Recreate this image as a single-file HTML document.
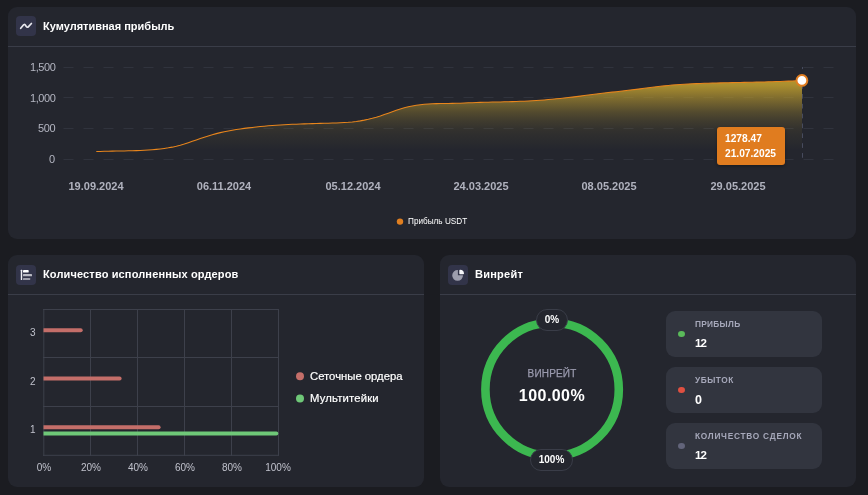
<!DOCTYPE html>
<html><head><meta charset="utf-8">
<style>
html,body{margin:0;padding:0;}
body{width:868px;height:495px;background:#1b1c21;position:relative;overflow:hidden;font-family:"Liberation Sans",sans-serif;}
.card{position:absolute;background:#24262e;border-radius:9px;}
.sep{position:absolute;left:0;right:0;top:39px;height:1px;background:#3a3d48;}
.ico{position:absolute;width:20px;height:20px;border-radius:4px;background:#323449;}
.t{position:absolute;white-space:nowrap;line-height:1;will-change:transform;}
.title{font-weight:bold;font-size:11px;color:#fff;}
.yl{font-size:11px;color:#b4b6c2;text-align:right;letter-spacing:-0.4px;}
.xl{font-size:11px;font-weight:bold;color:#b0b2be;transform:translateX(-50%);}
.bl{font-size:10px;color:#c0c2cc;}
.stat{position:absolute;left:666px;width:156px;height:46px;border-radius:9px;background:#32353f;}
.dot{position:absolute;width:6.6px;height:6px;border-radius:50%;}
.sl{font-size:8.3px;font-weight:bold;color:#a6a8ba;}
.sv{font-size:11.5px;font-weight:bold;color:#fff;letter-spacing:-1px;}
.pill{position:absolute;box-sizing:border-box;height:22px;border-radius:11px;border:1px solid #3a3d48;background:#24262e;color:#fff;font-weight:bold;font-size:10px;text-align:center;line-height:20px;will-change:transform;}
svg{position:absolute;left:0;top:0;}
</style></head><body>

<div class="card" style="left:8px;top:7px;width:848px;height:231.5px;"><div class="sep"></div></div>
<div class="card" style="left:8px;top:255px;width:416px;height:232px;"><div class="sep"></div></div>
<div class="card" style="left:440px;top:255px;width:416px;height:232px;"><div class="sep"></div></div>

<div class="ico" style="left:16px;top:16px;"></div>
<div class="ico" style="left:16px;top:265px;"></div>
<div class="ico" style="left:448px;top:265px;"></div>

<svg width="868" height="495" viewBox="0 0 868 495">
<defs>
<linearGradient id="g" gradientUnits="userSpaceOnUse" x1="0" y1="80" x2="0" y2="159.5">
<stop offset="0" stop-color="#b5962f" stop-opacity="0.98"/>
<stop offset="0.063" stop-color="#b5962f" stop-opacity="0.93"/>
<stop offset="0.25" stop-color="#b5962f" stop-opacity="0.59"/>
<stop offset="0.4" stop-color="#b5962f" stop-opacity="0.33"/>
<stop offset="0.515" stop-color="#b5962f" stop-opacity="0.19"/>
<stop offset="0.61" stop-color="#b5962f" stop-opacity="0.11"/>
<stop offset="0.69" stop-color="#b5962f" stop-opacity="0.07"/>
<stop offset="0.78" stop-color="#b5962f" stop-opacity="0.04"/>
<stop offset="0.88" stop-color="#b5962f" stop-opacity="0"/>
</linearGradient>
<filter id="bl" x="-20%" y="-20%" width="140%" height="150%"><feGaussianBlur stdDeviation="1.5"/></filter>
</defs>
<!-- icons -->
<path d="M20.7 28.3 L23.2 25.2 Q24.3 23.8 25.3 25.1 L26.3 26.5 Q27.3 27.9 28.5 26.6 L31.4 23.5" fill="none" stroke="#e8e8ee" stroke-width="1.7" stroke-linecap="round" stroke-linejoin="round"/>
<g fill="#eeeef3">
<rect x="20.8" y="269.8" width="1.4" height="10.3" rx="0.4"/>
<rect x="23" y="269.9" width="5.7" height="2.7" rx="0.9" fill="#ffffff"/>
<rect x="23" y="274" width="9" height="2.3" rx="0.6" opacity="0.72"/>
<rect x="23" y="277.9" width="7.2" height="2.2" rx="0.6" opacity="0.58"/>
</g>
<g>
<path d="M457.9 270.0 A5.4 5.4 0 1 0 463.0 275.3 L457.9 275.3 Z" fill="#9c9dad"/>
<path d="M459.3 270.5 Q459.3 269.7 460.1 269.7 A4.0 4.0 0 0 1 464.0 273.4 Q464.0 274.2 463.2 274.2 L460.1 274.2 Q459.3 274.2 459.3 273.4 Z" fill="#f6f6f9"/>
</g>
<!-- grid line chart -->
<g stroke="#30333d" stroke-width="1" stroke-dasharray="10 10">
<line x1="63.5" y1="67.5" x2="833.6" y2="67.5"/>
<line x1="63.5" y1="97.5" x2="833.6" y2="97.5"/>
<line x1="63.5" y1="128.5" x2="833.6" y2="128.5"/>
<line x1="63.5" y1="159.5" x2="833.6" y2="159.5"/>
</g>
<path d="M96.3 151.57 L100.3 151.41 L104.3 151.29 L108.3 151.19 L112.3 151.11 L116.3 151.04 L120.3 150.98 L124.3 150.91 L128.3 150.83 L132.3 150.73 L136.3 150.61 L140.3 150.46 L144.3 150.26 L148.3 150.02 L152.3 149.73 L156.3 149.37 L160.3 148.94 L164.3 148.44 L168.3 147.85 L172.3 147.14 L176.3 146.29 L180.3 145.26 L184.3 144.06 L188.3 142.74 L192.3 141.37 L196.3 139.99 L200.3 138.62 L204.3 137.27 L208.3 135.98 L212.3 134.76 L216.3 133.63 L220.3 132.62 L224.3 131.71 L228.3 130.90 L232.3 130.18 L236.3 129.52 L240.3 128.93 L244.3 128.38 L248.3 127.88 L252.3 127.41 L256.3 126.97 L260.3 126.57 L264.3 126.19 L268.3 125.85 L272.3 125.54 L276.3 125.25 L280.3 124.98 L284.3 124.75 L288.3 124.53 L292.3 124.33 L296.3 124.16 L300.3 124.00 L304.3 123.86 L308.3 123.73 L312.3 123.61 L316.3 123.50 L320.3 123.39 L324.3 123.27 L328.3 123.16 L332.3 123.04 L336.3 122.91 L340.3 122.76 L344.3 122.56 L348.3 122.30 L352.3 121.94 L356.3 121.47 L360.3 120.87 L364.3 120.13 L368.3 119.25 L372.3 118.25 L376.3 117.14 L380.3 115.93 L384.3 114.62 L388.3 113.23 L392.3 111.79 L396.3 110.36 L400.3 109.01 L404.3 107.80 L408.3 106.78 L412.3 105.93 L416.3 105.25 L420.3 104.72 L424.3 104.31 L428.3 104.00 L432.3 103.78 L436.3 103.63 L440.3 103.53 L444.3 103.47 L448.3 103.41 L452.3 103.36 L456.3 103.27 L460.3 103.15 L464.3 103.00 L468.3 102.83 L472.3 102.66 L476.3 102.50 L480.3 102.37 L484.3 102.25 L488.3 102.16 L492.3 102.07 L496.3 101.99 L500.3 101.91 L504.3 101.82 L508.3 101.73 L512.3 101.62 L516.3 101.49 L520.3 101.34 L524.3 101.16 L528.3 100.96 L532.3 100.74 L536.3 100.48 L540.3 100.21 L544.3 99.90 L548.3 99.58 L552.3 99.23 L556.3 98.85 L560.3 98.45 L564.3 98.03 L568.3 97.59 L572.3 97.12 L576.3 96.62 L580.3 96.11 L584.3 95.59 L588.3 95.07 L592.3 94.54 L596.3 94.03 L600.3 93.53 L604.3 93.05 L608.3 92.58 L612.3 92.13 L616.3 91.68 L620.3 91.23 L624.3 90.77 L628.3 90.32 L632.3 89.85 L636.3 89.36 L640.3 88.86 L644.3 88.35 L648.3 87.84 L652.3 87.33 L656.3 86.83 L660.3 86.35 L664.3 85.89 L668.3 85.47 L672.3 85.08 L676.3 84.73 L680.3 84.44 L684.3 84.19 L688.3 83.98 L692.3 83.79 L696.3 83.63 L700.3 83.48 L704.3 83.34 L708.3 83.21 L712.3 83.09 L716.3 82.99 L720.3 82.88 L724.3 82.79 L728.3 82.70 L732.3 82.61 L736.3 82.53 L740.3 82.44 L744.3 82.36 L748.3 82.28 L752.3 82.19 L756.3 82.10 L760.3 82.01 L764.3 81.91 L768.3 81.80 L772.3 81.69 L776.3 81.56 L780.3 81.43 L784.3 81.28 L788.3 81.12 L792.3 80.95 L796.3 80.76 L800.3 80.55 L802.0 80.45 L802 159.5 L96.3 159.5 Z" fill="url(#g)"/>
<path d="M96.3 151.57 L100.3 151.41 L104.3 151.29 L108.3 151.19 L112.3 151.11 L116.3 151.04 L120.3 150.98 L124.3 150.91 L128.3 150.83 L132.3 150.73 L136.3 150.61 L140.3 150.46 L144.3 150.26 L148.3 150.02 L152.3 149.73 L156.3 149.37 L160.3 148.94 L164.3 148.44 L168.3 147.85 L172.3 147.14 L176.3 146.29 L180.3 145.26 L184.3 144.06 L188.3 142.74 L192.3 141.37 L196.3 139.99 L200.3 138.62 L204.3 137.27 L208.3 135.98 L212.3 134.76 L216.3 133.63 L220.3 132.62 L224.3 131.71 L228.3 130.90 L232.3 130.18 L236.3 129.52 L240.3 128.93 L244.3 128.38 L248.3 127.88 L252.3 127.41 L256.3 126.97 L260.3 126.57 L264.3 126.19 L268.3 125.85 L272.3 125.54 L276.3 125.25 L280.3 124.98 L284.3 124.75 L288.3 124.53 L292.3 124.33 L296.3 124.16 L300.3 124.00 L304.3 123.86 L308.3 123.73 L312.3 123.61 L316.3 123.50 L320.3 123.39 L324.3 123.27 L328.3 123.16 L332.3 123.04 L336.3 122.91 L340.3 122.76 L344.3 122.56 L348.3 122.30 L352.3 121.94 L356.3 121.47 L360.3 120.87 L364.3 120.13 L368.3 119.25 L372.3 118.25 L376.3 117.14 L380.3 115.93 L384.3 114.62 L388.3 113.23 L392.3 111.79 L396.3 110.36 L400.3 109.01 L404.3 107.80 L408.3 106.78 L412.3 105.93 L416.3 105.25 L420.3 104.72 L424.3 104.31 L428.3 104.00 L432.3 103.78 L436.3 103.63 L440.3 103.53 L444.3 103.47 L448.3 103.41 L452.3 103.36 L456.3 103.27 L460.3 103.15 L464.3 103.00 L468.3 102.83 L472.3 102.66 L476.3 102.50 L480.3 102.37 L484.3 102.25 L488.3 102.16 L492.3 102.07 L496.3 101.99 L500.3 101.91 L504.3 101.82 L508.3 101.73 L512.3 101.62 L516.3 101.49 L520.3 101.34 L524.3 101.16 L528.3 100.96 L532.3 100.74 L536.3 100.48 L540.3 100.21 L544.3 99.90 L548.3 99.58 L552.3 99.23 L556.3 98.85 L560.3 98.45 L564.3 98.03 L568.3 97.59 L572.3 97.12 L576.3 96.62 L580.3 96.11 L584.3 95.59 L588.3 95.07 L592.3 94.54 L596.3 94.03 L600.3 93.53 L604.3 93.05 L608.3 92.58 L612.3 92.13 L616.3 91.68 L620.3 91.23 L624.3 90.77 L628.3 90.32 L632.3 89.85 L636.3 89.36 L640.3 88.86 L644.3 88.35 L648.3 87.84 L652.3 87.33 L656.3 86.83 L660.3 86.35 L664.3 85.89 L668.3 85.47 L672.3 85.08 L676.3 84.73 L680.3 84.44 L684.3 84.19 L688.3 83.98 L692.3 83.79 L696.3 83.63 L700.3 83.48 L704.3 83.34 L708.3 83.21 L712.3 83.09 L716.3 82.99 L720.3 82.88 L724.3 82.79 L728.3 82.70 L732.3 82.61 L736.3 82.53 L740.3 82.44 L744.3 82.36 L748.3 82.28 L752.3 82.19 L756.3 82.10 L760.3 82.01 L764.3 81.91 L768.3 81.80 L772.3 81.69 L776.3 81.56 L780.3 81.43 L784.3 81.28 L788.3 81.12 L792.3 80.95 L796.3 80.76 L800.3 80.55 L802.0 80.45" fill="none" stroke="#e8851c" stroke-width="1.05" stroke-linejoin="round"/>
<line x1="802.5" y1="67" x2="802.5" y2="159" stroke="#474b5e" stroke-width="1" stroke-dasharray="4.7 5.15" stroke-dashoffset="2.6"/>
<circle cx="801.9" cy="80.45" r="5.4" fill="#fff" stroke="#e07c1f" stroke-width="2"/>
<!-- tooltip -->
<rect x="717" y="128.5" width="68" height="38" rx="3" fill="#000" opacity="0.3" filter="url(#bl)"/>
<rect x="717" y="127" width="68" height="38" rx="3" fill="#e07c1f"/>
<!-- legend marker -->
<circle cx="400" cy="221.6" r="3.2" fill="#e07f20"/>

<!-- bar chart grid -->
<g stroke="#3d404b" stroke-width="1">
<line x1="43.8" y1="309" x2="43.8" y2="455.8"/>
<line x1="90.5" y1="309" x2="90.5" y2="455.8"/>
<line x1="137.5" y1="309" x2="137.5" y2="455.8"/>
<line x1="184.5" y1="309" x2="184.5" y2="455.8"/>
<line x1="231.5" y1="309" x2="231.5" y2="455.8"/>
<line x1="278.5" y1="309" x2="278.5" y2="455.8"/>
<line x1="43" y1="309.5" x2="279" y2="309.5"/>
<line x1="43" y1="357.5" x2="279" y2="357.5"/>
<line x1="43" y1="406.5" x2="279" y2="406.5"/>
<line x1="43" y1="455.3" x2="279" y2="455.3"/>
</g>
<g fill="#c46e69">
<path d="M43.5 328.3 H80.7 a2 2 0 0 1 0 4 H43.5 Z"/>
<path d="M43.5 376.6 H119.6 a2 2 0 0 1 0 4 H43.5 Z"/>
<path d="M43.5 425.3 H158.6 a2 2 0 0 1 0 4 H43.5 Z"/>
</g>
<path d="M43.5 431.5 H276.3 a2 2 0 0 1 0 4 H43.5 Z" fill="#6fc878"/>
<circle cx="300" cy="376.3" r="4" fill="#c46e69"/>
<circle cx="300" cy="398.5" r="4" fill="#6fc878"/>

<!-- ring -->
<circle cx="552.1" cy="389.4" r="66.7" fill="none" stroke="#3cb850" stroke-width="8.6"/>
</svg>

<div class="t title" id="t1" style="left:43px;top:21px;">Кумулятивная прибыль</div>
<div class="t title" id="t2" style="left:43px;top:269px;letter-spacing:0.14px;">Количество исполненных ордеров</div>
<div class="t title" id="t3" style="left:474.7px;top:269px;letter-spacing:0.25px;">Винрейт</div>

<div class="t yl" id="y1" style="right:812.8px;top:62px;">1,500</div>
<div class="t yl" id="y2" style="right:812.8px;top:93px;">1,000</div>
<div class="t yl" id="y3" style="right:812.8px;top:123px;">500</div>
<div class="t yl" id="y4" style="right:812.8px;top:154px;">0</div>

<div class="t xl" id="x1" style="left:95.8px;top:181px;">19.09.2024</div>
<div class="t xl" id="x2" style="left:224.3px;top:181px;">06.11.2024</div>
<div class="t xl" id="x3" style="left:352.6px;top:181px;">05.12.2024</div>
<div class="t xl" id="x4" style="left:481px;top:181px;">24.03.2025</div>
<div class="t xl" id="x5" style="left:609.3px;top:181px;">08.05.2025</div>
<div class="t xl" id="x6" style="left:737.6px;top:181px;">29.05.2025</div>

<div class="t" id="lg" style="left:408px;top:217.5px;font-size:8.2px;color:#fff;">Прибыль USDT</div>

<div class="t" id="tt1" style="left:725px;top:134px;font-size:10.2px;font-weight:bold;color:#fff;">1278.47</div>
<div class="t" id="tt2" style="left:725px;top:149px;font-size:10.2px;font-weight:bold;color:#fff;">21.07.2025</div>

<div class="t bl" id="b3" style="right:832px;top:327.5px;">3</div>
<div class="t bl" id="b2" style="right:832px;top:376.5px;">2</div>
<div class="t bl" id="b1" style="right:832px;top:424.5px;">1</div>
<div class="t bl" id="p0" style="left:43.5px;top:462.5px;transform:translateX(-50%);">0%</div>
<div class="t bl" id="p1" style="left:90.5px;top:462.5px;transform:translateX(-50%);">20%</div>
<div class="t bl" id="p2" style="left:137.5px;top:462.5px;transform:translateX(-50%);">40%</div>
<div class="t bl" id="p3" style="left:184.5px;top:462.5px;transform:translateX(-50%);">60%</div>
<div class="t bl" id="p4" style="left:231.5px;top:462.5px;transform:translateX(-50%);">80%</div>
<div class="t bl" id="p5" style="left:277.5px;top:462.5px;transform:translateX(-50%);">100%</div>

<div class="t" id="l1" style="left:310px;top:370.5px;font-size:11.3px;color:#fff;-webkit-text-stroke:0.2px #fff;">Сеточные ордера</div>
<div class="t" id="l2" style="left:309.8px;top:393.3px;font-size:11.3px;color:#fff;letter-spacing:0.17px;-webkit-text-stroke:0.2px #fff;">Мультитейки</div>

<div class="pill" id="pl0" style="left:536px;top:309px;width:32px;">0%</div>
<div class="pill" id="pl1" style="left:530.2px;top:449px;width:43px;">100%</div>
<div class="t" id="w1" style="left:552px;top:368.8px;font-size:10px;color:#9a9aae;letter-spacing:0.17px;-webkit-text-stroke:0.25px #9a9aae;transform:translateX(-50%);">ВИНРЕЙТ</div>
<div class="t" id="w2" style="left:552px;top:388.3px;font-size:16px;letter-spacing:0.45px;font-weight:bold;color:#fff;margin-left:0.2px;transform:translateX(-50%);">100.00%</div>

<div class="stat" style="top:311px;"></div>
<div class="stat" style="top:367px;"></div>
<div class="stat" style="top:423px;"></div>
<div class="dot" style="left:678.1px;top:331px;background:#5aba5a;"></div>
<div class="dot" style="left:678.1px;top:387px;background:#e05041;"></div>
<div class="dot" style="left:678.1px;top:443px;background:#62647a;"></div>
<div class="t sl" id="s1" style="left:694.7px;top:320.2px;letter-spacing:0.3px;">ПРИБЫЛЬ</div>
<div class="t sv" id="v1" style="left:694.5px;top:338px;">12</div>
<div class="t sl" id="s2" style="left:694.7px;top:376.2px;letter-spacing:0.52px;">УБЫТОК</div>
<div class="t sv" id="v2" style="left:694.5px;top:394px;font-size:12.5px;">0</div>
<div class="t sl" id="s3" style="left:694.7px;top:432.2px;letter-spacing:0.75px;">КОЛИЧЕСТВО СДЕЛОК</div>
<div class="t sv" id="v3" style="left:694.5px;top:450px;">12</div>
</body></html>
